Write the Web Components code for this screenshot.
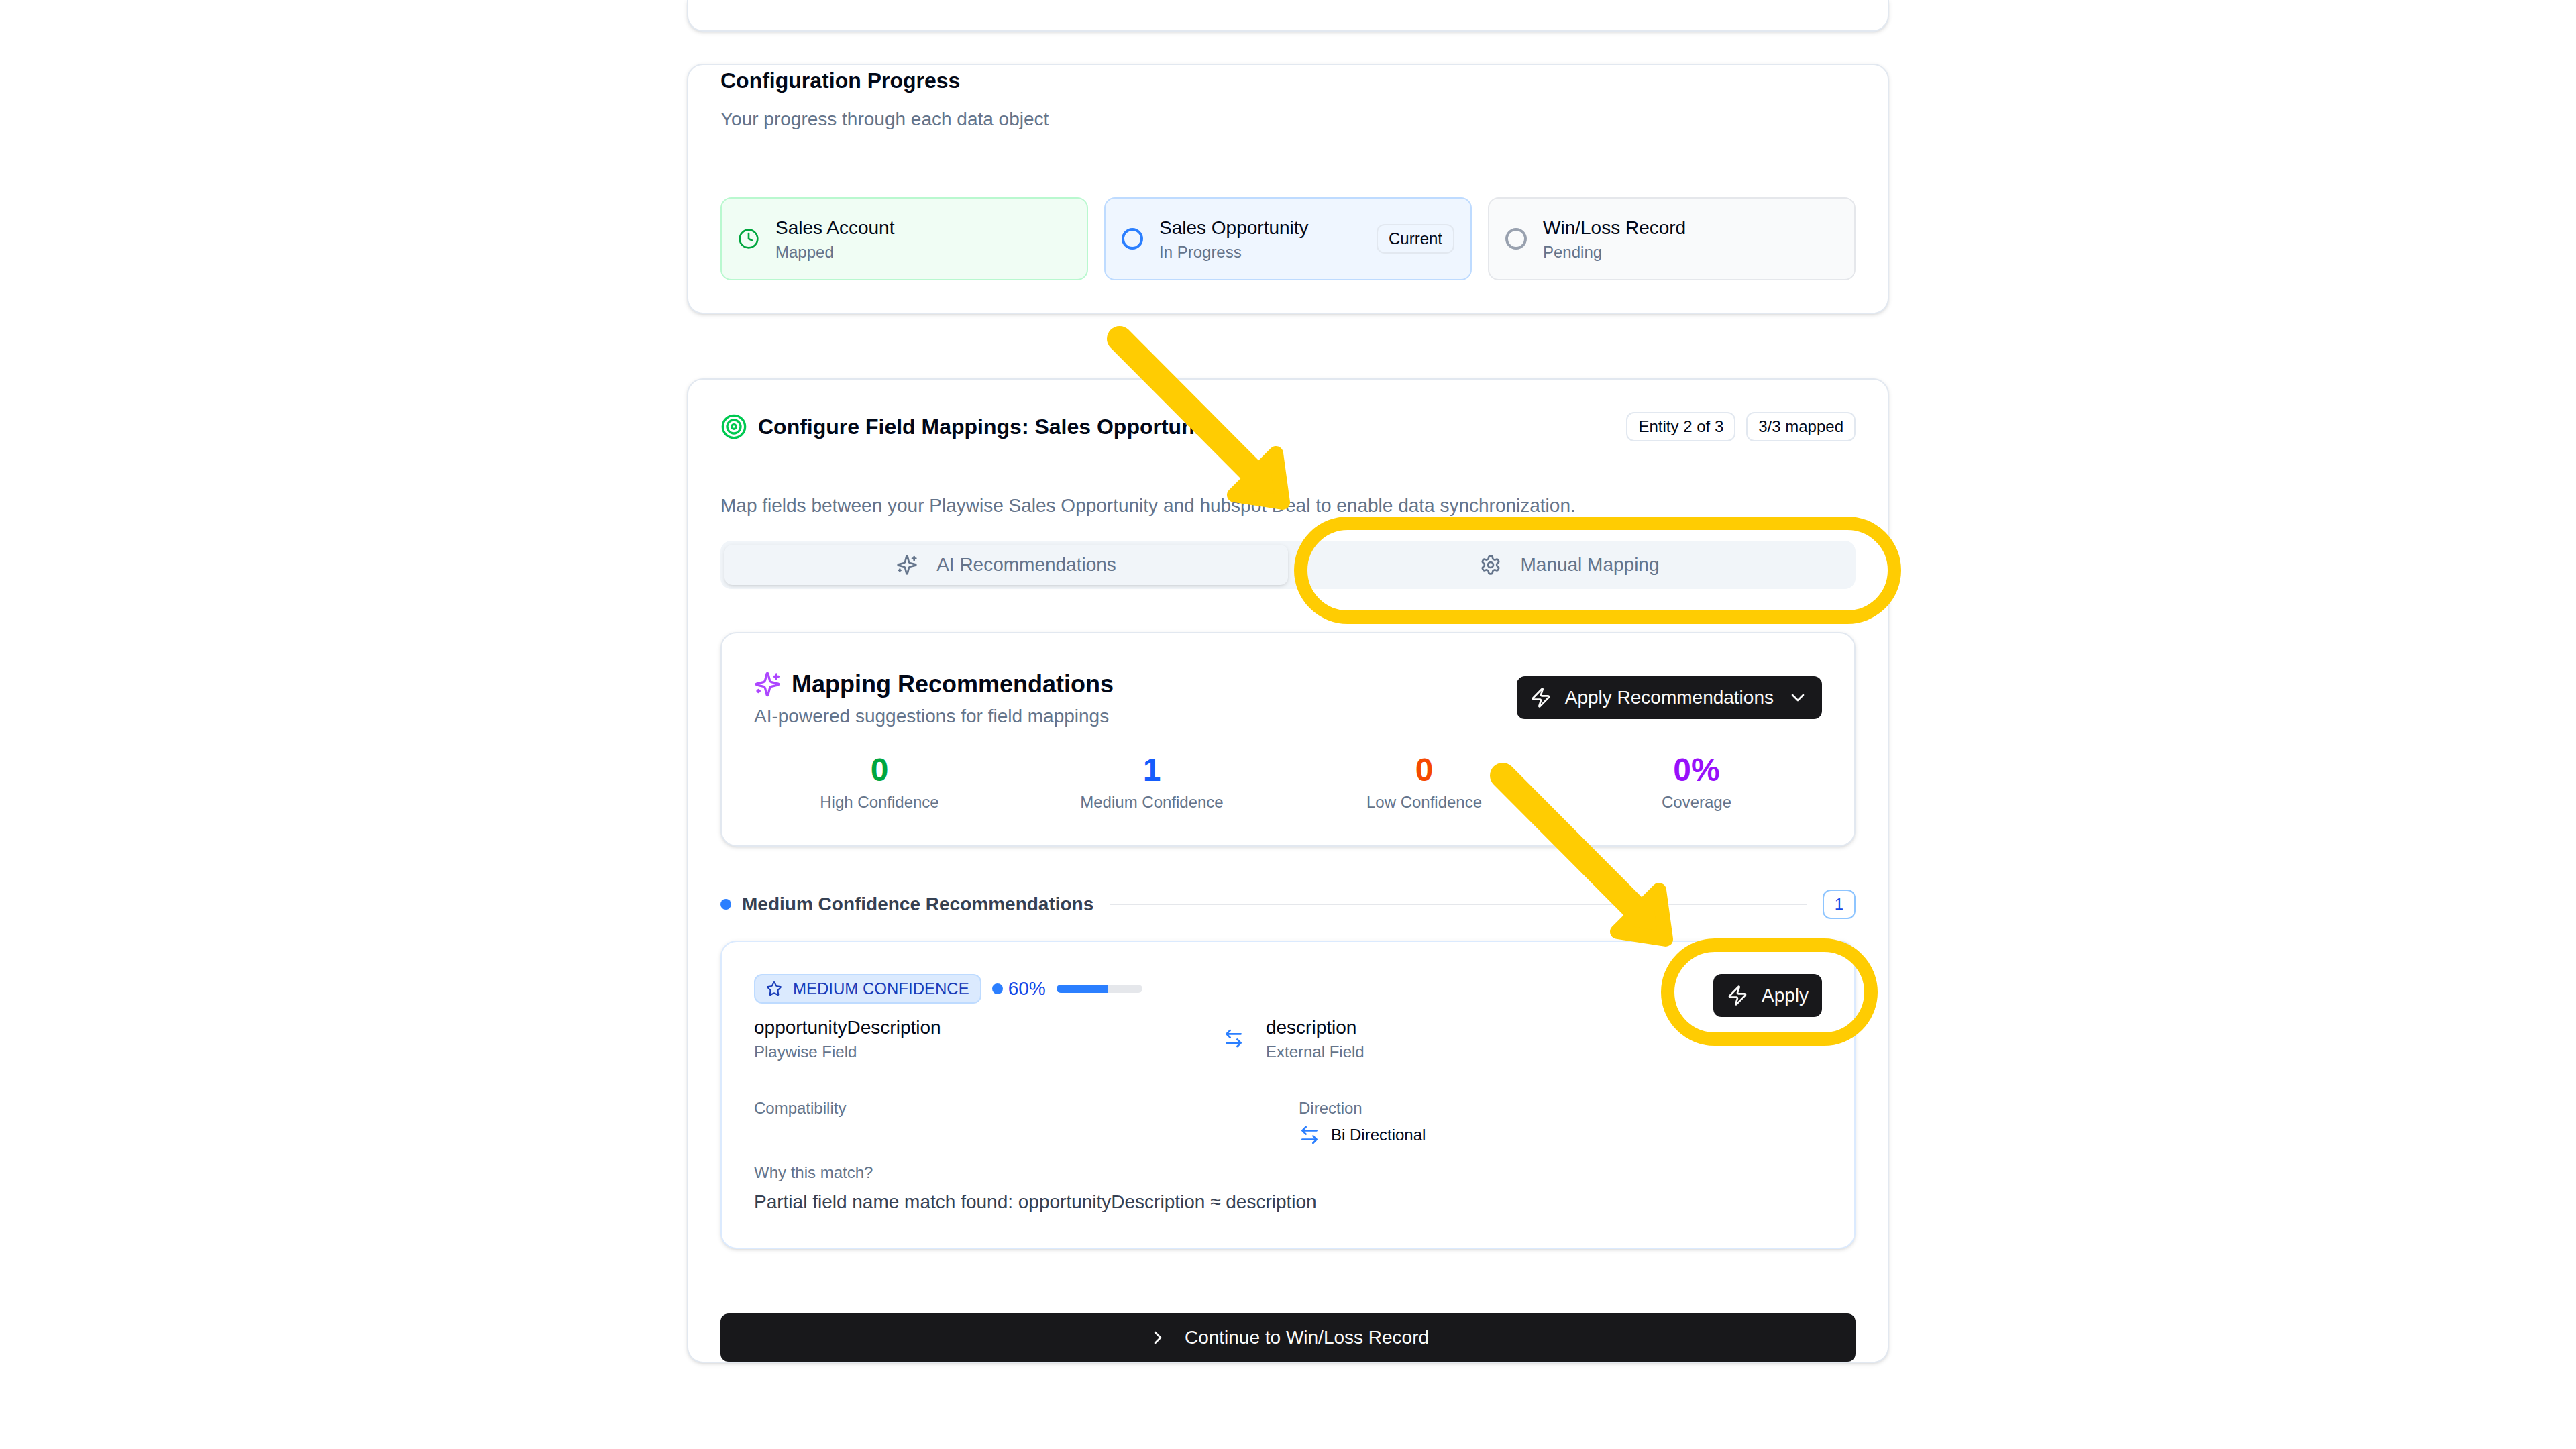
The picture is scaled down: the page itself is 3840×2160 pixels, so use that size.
<!DOCTYPE html>
<html lang="en">
<head>
<meta charset="utf-8">
<meta name="viewport" content="width=device-width, initial-scale=1">
<title>Configure Field Mappings</title>
<style>
  html { background: #fff; }
  body {
    margin: 0;
    color: #020817;
    font-family: "Liberation Sans", Arial, sans-serif;
    font-size: 28px;
    line-height: 40px;
  }
</style>
</head>
<body>
<mapping-page></mapping-page>
<script>
const ICONS = {
  clock: '<circle cx="12" cy="12" r="10"/><path d="M12 6v6l4 2"/>',
  target: '<circle cx="12" cy="12" r="10"/><circle cx="12" cy="12" r="6"/><circle cx="12" cy="12" r="2"/>',
  sparkles: '<path d="M9.937 15.5A2 2 0 0 0 8.5 14.063l-6.135-1.582a.5.5 0 0 1 0-.962L8.5 9.936A2 2 0 0 0 9.937 8.5l1.582-6.135a.5.5 0 0 1 .963 0L14.063 8.5A2 2 0 0 0 15.5 9.937l6.135 1.581a.5.5 0 0 1 0 .964L15.5 14.063a2 2 0 0 0-1.437 1.437l-1.582 6.135a.5.5 0 0 1-.963 0z"/><path d="M20 3v4M22 5h-4M4 17v2M5 18H3"/>',
  settings: '<path d="M12.22 2h-.44a2 2 0 0 0-2 2v.18a2 2 0 0 1-1 1.73l-.43.25a2 2 0 0 1-2 0l-.15-.08a2 2 0 0 0-2.73.73l-.22.38a2 2 0 0 0 .73 2.73l.15.1a2 2 0 0 1 1 1.72v.51a2 2 0 0 1-1 1.74l-.15.09a2 2 0 0 0-.73 2.73l.22.38a2 2 0 0 0 2.73.73l.15-.08a2 2 0 0 1 2 0l.43.25a2 2 0 0 1 1 1.73V20a2 2 0 0 0 2 2h.44a2 2 0 0 0 2-2v-.18a2 2 0 0 1 1-1.73l.43-.25a2 2 0 0 1 2 0l.15.08a2 2 0 0 0 2.73-.73l.22-.39a2 2 0 0 0-.73-2.73l-.15-.08a2 2 0 0 1-1-1.74v-.5a2 2 0 0 1 1-1.74l.15-.09a2 2 0 0 0 .73-2.73l-.22-.38a2 2 0 0 0-2.73-.73l-.15.08a2 2 0 0 1-2 0l-.43-.25a2 2 0 0 1-1-1.73V4a2 2 0 0 0-2-2z"/><circle cx="12" cy="12" r="3"/>',
  zap: '<path d="M4 14a1 1 0 0 1-.78-1.63l9.9-10.2a.5.5 0 0 1 .86.46l-1.92 6.02A1 1 0 0 0 13 10h7a1 1 0 0 1 .78 1.63l-9.9 10.2a.5.5 0 0 1-.86-.46l1.92-6.02A1 1 0 0 0 11 14z"/>',
  down: '<path d="m6 9 6 6 6-6"/>',
  right: '<path d="m9 18 6-6-6-6"/>',
  swap: '<path d="M8 3 4 7l4 4M4 7h16M16 21l4-4-4-4M20 17H4"/>',
  star: '<path d="M11.525 2.295a.53.53 0 0 1 .95 0l2.31 4.679a2.123 2.123 0 0 0 1.595 1.16l5.166.756a.53.53 0 0 1 .294.904l-3.736 3.638a2.123 2.123 0 0 0-.611 1.878l.882 5.14a.53.53 0 0 1-.771.56l-4.618-2.428a2.122 2.122 0 0 0-1.973 0L6.396 21.01a.53.53 0 0 1-.77-.56l.881-5.139a2.122 2.122 0 0 0-.611-1.879L2.16 9.795a.53.53 0 0 1 .294-.906l5.165-.755a2.122 2.122 0 0 0 1.597-1.16z"/>'
};

function define(name, render) {
  customElements.define(name, class extends HTMLElement {
    constructor() {
      super();
      this.attachShadow({ mode: 'open' });
    }
    connectedCallback() {
      if (!this.shadowRoot.firstChild) {
        this.shadowRoot.innerHTML = '<style>*{box-sizing:border-box}:host{box-sizing:border-box}</style>' + render(this);
      }
    }
  });
}

define('ui-icon', el => `
  <style>
    :host { display: block; flex: none; width: var(--icon-size, 32px); height: var(--icon-size, 32px); }
    svg { display: block; width: 100%; height: 100%; fill: none; stroke: currentColor; stroke-width: 2; stroke-linecap: round; stroke-linejoin: round; }
  </style>
  <svg viewBox="0 0 24 24" aria-hidden="true">${ICONS[el.getAttribute('name')]}</svg>`);

define('ui-card', () => `
  <style>
    :host {
      display: block; background: #fff; padding: 48px;
      border: 2px solid var(--card-border, #e2e8f0); border-radius: 24px;
      box-shadow: 0 2px 6px rgba(0,0,0,.1), 0 2px 4px -2px rgba(0,0,0,.1);
    }
    :host([flush~="top"]) { padding-top: 0; }
    :host([flush~="bottom"]) { padding-bottom: 0; }
    :host([tail]) { border-top: 0; border-radius: 0 0 24px 24px; padding-top: 0; padding-bottom: 45px; }
  </style>
  <slot></slot>`);

define('ui-badge', () => `
  <style>
    :host {
      display: flex; align-items: center; gap: 16px; flex: none;
      padding: 4px 16px; border: 2px solid var(--badge-border, #e2e8f0); border-radius: 12px;
      background: var(--badge-bg, transparent); color: var(--badge-color, inherit);
      font-size: 24px; line-height: 32px; --icon-size: 24px;
    }
  </style>
  <slot></slot>`);

define('ui-button', el => `
  <style>
    :host { display: block; flex: none; }
    button {
      display: flex; align-items: center; justify-content: center; gap: 20px;
      width: 100%; margin: 0; padding: 12px 20px; border: 0; border-radius: 12px;
      background: #18181b; color: #fafafa; font: inherit; cursor: pointer;
    }
    :host([wide]) button { padding: 16px 20px; gap: 24px; }
  </style>
  <button type="button"${el.hasAttribute('menu') ? ' aria-haspopup="menu"' : ''}><slot></slot></button>`);

define('step-tile', el => {
  const state = el.getAttribute('state');
  return `
  <style>
    :host {
      display: flex; align-items: center; gap: 24px; min-width: 0;
      padding: 24px; border: 2px solid #e5e7eb; border-radius: 16px; background: #f9fafb;
    }
    :host([state="done"]) { background: #f0fdf4; border-color: #b9f8cf; color: inherit; }
    :host([state="current"]) { background: #eff6ff; border-color: #bedbff; }
    ui-icon { color: #00a63e; }
    .ring { flex: none; width: 32px; height: 32px; border: 4px solid #99a1af; border-radius: 50%; }
    :host([state="current"]) .ring { border-color: #2b7fff; }
    .text { flex: 1; min-width: 0; }
    .note { font-size: 24px; line-height: 32px; color: #64748b; }
  </style>
  ${state === 'done' ? '<ui-icon name="clock"></ui-icon>' : '<span class="ring"></span>'}
  <div class="text"><div>${el.getAttribute('label')}</div><div class="note">${el.getAttribute('note')}</div></div>
  <slot></slot>`;
});

define('mode-tabs', () => `
  <style>
    :host { display: grid; grid-template-columns: 1fr 1fr; padding: 6px; border-radius: 16px; background: #f1f5f9; color: #64748b; }
    button {
      display: flex; align-items: center; justify-content: center; gap: 28px;
      margin: 0; padding: 10px 16px; border: 0; border-radius: 12px;
      background: transparent; color: inherit; font: inherit; cursor: pointer;
    }
    button[aria-selected="true"] { box-shadow: 0 2px 6px rgba(0,0,0,.1), 0 2px 4px -2px rgba(0,0,0,.1); }
  </style>
  <button type="button" role="tab" aria-selected="true"><ui-icon name="sparkles"></ui-icon><span>AI Recommendations</span></button>
  <button type="button" role="tab" aria-selected="false"><ui-icon name="settings"></ui-icon><span>Manual Mapping</span></button>`);

define('stat-figure', el => `
  <style>
    :host { display: block; text-align: center; }
    .value { font-size: 48px; line-height: 64px; font-weight: 700; color: var(--stat-color); }
    .label { font-size: 24px; line-height: 32px; color: #64748b; }
  </style>
  <div class="value">${el.getAttribute('value')}</div>
  <div class="label">${el.getAttribute('label')}</div>`);

define('confidence-meter', el => `
  <style>
    :host { display: flex; align-items: center; color: #1447e6; }
    .dot { width: 16px; height: 16px; border-radius: 50%; background: #2b7fff; margin-right: 8px; }
    .track { width: 128px; height: 12px; margin-left: 16px; border-radius: 6px; background: #e5e7eb; overflow: hidden; }
    .fill { height: 100%; width: ${el.getAttribute('value')}%; background: #2b7fff; }
  </style>
  <span class="dot"></span><span>${el.getAttribute('value')}%</span>
  <div class="track" role="progressbar" aria-label="Confidence" aria-valuenow="${el.getAttribute('value')}"><div class="fill"></div></div>`);

define('recommendation-card', () => `
  <style>
    :host { display: block; }
    ui-card { --card-border: #dbeafe; }
    .head { display: flex; align-items: flex-start; }
    .summary { flex: 1; min-width: 0; }
    .line { display: flex; align-items: center; gap: 16px; margin-bottom: 16px; }
    .line ui-badge { --badge-bg: #dbeafe; --badge-border: #bedbff; --badge-color: #193cb8; }
    .fields { display: grid; grid-template-columns: 1fr auto 1fr; align-items: center; gap: 32px; }
    .fields ui-icon, .direction ui-icon { color: #2b7fff; }
    .small { font-size: 24px; line-height: 32px; }
    .muted { color: #64748b; }
    .details { display: grid; grid-template-columns: 1fr 1fr; gap: 32px; margin: 52px 0 24px; }
    .direction { display: flex; align-items: center; gap: 16px; margin-top: 8px; }
    .reason { margin: 8px 0 0; color: #364153; }
  </style>
  <ui-card>
    <div class="head">
      <div class="summary">
        <div class="line">
          <ui-badge><ui-icon name="star"></ui-icon><span>MEDIUM CONFIDENCE</span></ui-badge>
          <confidence-meter value="60"></confidence-meter>
        </div>
        <div class="fields">
          <div><div>opportunityDescription</div><div class="small muted">Playwise Field</div></div>
          <ui-icon name="swap"></ui-icon>
          <div><div>description</div><div class="small muted">External Field</div></div>
        </div>
      </div>
      <ui-button><ui-icon name="zap"></ui-icon><span>Apply</span></ui-button>
    </div>
    <div class="details small">
      <div class="muted">Compatibility</div>
      <div><div class="muted">Direction</div><div class="direction"><ui-icon name="swap"></ui-icon><span>Bi Directional</span></div></div>
    </div>
    <div class="small muted">Why this match?</div>
    <p class="reason">Partial field name match found: opportunityDescription ≈ description</p>
  </ui-card>`);

/* Yellow walkthrough marks drawn over the page. */
define('guide-marks', () => `
  <style>
    :host { display: block; position: absolute; top: 0; left: 0; pointer-events: none; }
    svg { display: block; overflow: visible; fill: none; stroke: #ffcc02; stroke-linecap: round; stroke-linejoin: round; }
  </style>
  <svg width="1792" height="1600" viewBox="0 0 1792 1600" aria-hidden="true">
    <defs>
      <g id="arrow">
        <path d="M645 505 846 707" stroke-width="38"/>
        <path d="M878 676 816 738 888 749z" fill="#ffcc02" stroke-width="22"/>
      </g>
    </defs>
    <use href="#arrow"/>
    <use href="#arrow" x="571" y="651"/>
    <rect x="915" y="780" width="885" height="140" rx="70" stroke-width="20"/>
    <rect x="1462" y="1409" width="303" height="140" rx="70" stroke-width="20"/>
  </svg>`);

define('mapping-page', () => `
  <style>
    :host { display: block; }
    main { position: relative; max-width: 1792px; margin: 0 auto; padding-bottom: 128px; }
    h2, h3, h4, p { margin: 0; }
    h2 { font-size: 32px; line-height: 44px; }
    h3 { font-size: 36px; line-height: 56px; display: flex; align-items: center; gap: 16px; }
    h4 { font-size: 28px; line-height: 40px; color: #364153; }
    .muted { color: #64748b; }
    .progress { margin-top: 48px; }
    .progress h2 { line-height: 46px; margin-bottom: 15px; }
    .steps { display: grid; grid-template-columns: repeat(3, 1fr); gap: 24px; margin-top: 96px; }
    .mapping { margin-top: 96px; }
    .bar { display: flex; align-items: center; justify-content: space-between; }
    .group { display: flex; align-items: center; gap: 16px; }
    .large { --icon-size: 40px; }
    .green { color: #00c951; }
    .purple { color: #ad46ff; }
    .intro { margin-top: 76px; }
    mode-tabs { margin: 32px 0 64px; }
    .stats { display: grid; grid-template-columns: repeat(4, 1fr); gap: 32px; margin-top: 28px; }
    .section { display: flex; align-items: center; gap: 24px; margin: 64px 0 32px; }
    .section ui-badge { --badge-border: #8ec5ff; --badge-color: #1447e6; }
    .dot { width: 16px; height: 16px; border-radius: 50%; background: #2b7fff; }
    .rule { flex: 1; height: 2px; background: #e5e7eb; }
    .next { margin-top: 96px; }
  </style>
  <main>
    <ui-card tail></ui-card>

    <ui-card class="progress" flush="top">
      <h2>Configuration Progress</h2>
      <p class="muted">Your progress through each data object</p>
      <div class="steps">
        <step-tile state="done" label="Sales Account" note="Mapped"></step-tile>
        <step-tile state="current" label="Sales Opportunity" note="In Progress"><ui-badge>Current</ui-badge></step-tile>
        <step-tile state="pending" label="Win/Loss Record" note="Pending"></step-tile>
      </div>
    </ui-card>

    <ui-card class="mapping" flush="bottom">
      <div class="bar">
        <div class="group"><ui-icon class="large green" name="target"></ui-icon><h2>Configure Field Mappings: Sales Opportunity</h2></div>
        <div class="group"><ui-badge>Entity 2 of 3</ui-badge><ui-badge>3/3 mapped</ui-badge></div>
      </div>
      <p class="intro muted">Map fields between your Playwise Sales Opportunity and hubspot Deal to enable data synchronization.</p>
      <mode-tabs role="tablist"></mode-tabs>

      <ui-card>
        <div class="bar">
          <div>
            <h3><ui-icon class="large purple" name="sparkles"></ui-icon>Mapping Recommendations</h3>
            <p class="muted">AI-powered suggestions for field mappings</p>
          </div>
          <ui-button menu><ui-icon name="zap"></ui-icon><span>Apply Recommendations</span><ui-icon name="down"></ui-icon></ui-button>
        </div>
        <div class="stats">
          <stat-figure value="0" label="High Confidence" style="--stat-color:#00a63e"></stat-figure>
          <stat-figure value="1" label="Medium Confidence" style="--stat-color:#155dfc"></stat-figure>
          <stat-figure value="0" label="Low Confidence" style="--stat-color:#f54900"></stat-figure>
          <stat-figure value="0%" label="Coverage" style="--stat-color:#9810fa"></stat-figure>
        </div>
      </ui-card>

      <div class="section">
        <div class="group"><span class="dot"></span><h4>Medium Confidence Recommendations</h4></div>
        <span class="rule"></span>
        <ui-badge>1</ui-badge>
      </div>
      <recommendation-card></recommendation-card>
      <ui-button class="next" wide><ui-icon name="right"></ui-icon><span>Continue to Win/Loss Record</span></ui-button>
    </ui-card>

    <guide-marks></guide-marks>
  </main>`);
</script>
</body>
</html>
